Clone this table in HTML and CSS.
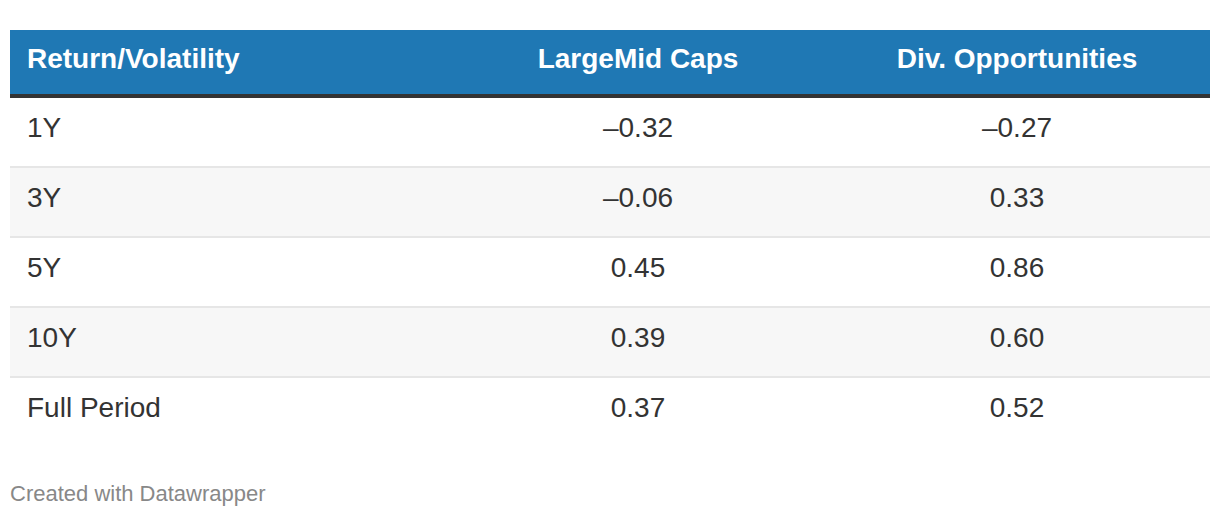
FILE: index.html
```html
<!DOCTYPE html>
<html>
<head>
<meta charset="utf-8">
<link rel="stylesheet" href="styles.css">
</head>
<body>
<div class="wrap">
  <table class="dw-table">
    <colgroup>
      <col class="c1"><col class="c2"><col class="c3">
    </colgroup>
    <thead>
      <tr>
        <th class="left">Return/Volatility</th>
        <th>LargeMid Caps</th>
        <th>Div. Opportunities</th>
      </tr>
    </thead>
    <tbody>
      <tr><td class="left">1Y</td><td>–0.32</td><td>–0.27</td></tr>
      <tr class="alt"><td class="left">3Y</td><td>–0.06</td><td>0.33</td></tr>
      <tr><td class="left">5Y</td><td>0.45</td><td>0.86</td></tr>
      <tr class="alt"><td class="left">10Y</td><td>0.39</td><td>0.60</td></tr>
      <tr class="last"><td class="left">Full Period</td><td>0.37</td><td>0.52</td></tr>
    </tbody>
  </table>
  <div class="footer">Created with Datawrapper</div>
</div>
</body>
</html>
```

FILE: styles.css
```css
html, body {
  margin: 0;
  padding: 0;
  background: #ffffff;
}
body {
  font-family: "Liberation Sans", Arial, Helvetica, sans-serif;
  color: #333333;
}
.wrap {
  padding: 30px 10px 0 10px;
}
.dw-table {
  width: 1200px;
  border-collapse: collapse;
  table-layout: fixed;
}
.c1 { width: 442px; }
.c2 { width: 372px; }
.c3 { width: 386px; }
.dw-table th {
  background: #1f78b4;
  color: #ffffff;
  font-weight: bold;
  font-size: 28px;
  line-height: 32px;
  padding: 13px 0 19px 0;
  text-align: center;
  border-bottom: 4px solid #333333;
}
.dw-table td {
  font-size: 28px;
  line-height: 32px;
  padding: 14px 0 22px 0;
  text-align: center;
  color: #333333;
  border-bottom: 2px solid #e6e6e6;
}
.dw-table .left {
  text-align: left;
  padding-left: 17px;
}
.dw-table tr.alt td {
  background: #f7f7f7;
}
.dw-table tr.last td {
  border-bottom: none;
}
.footer {
  margin-top: 35px;
  font-size: 22px;
  line-height: 25px;
  color: #888888;
}
```
